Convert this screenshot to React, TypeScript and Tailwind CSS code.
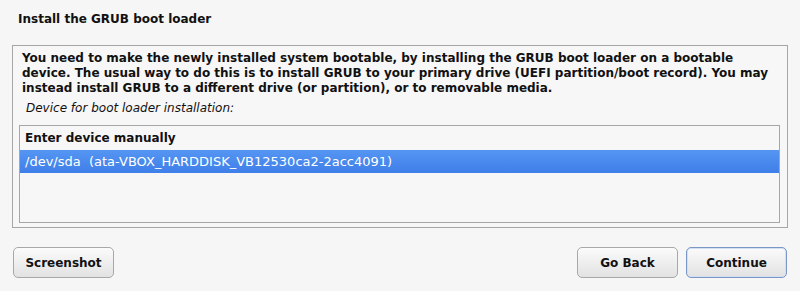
import React from "react";

const font = { fontFamily: '"DejaVu Sans", "Liberation Sans", sans-serif' };

function Btn({ label, primary }: { label: string; primary?: boolean }) {
  return (
    <button
      className={
        "h-[31px] w-[101px] rounded-[5px] border text-[12px] font-bold text-[#111] bg-gradient-to-b from-[#fbfbfb] to-[#e2e2e2] " +
        (primary ? "border-[#7a97c6] shadow-[inset_0_0_0_1px_#d4e0f2]" : "border-[#a8a8a8]")
      }
      style={font}
    >
      {label}
    </button>
  );
}

export default function App() {
  return (
    <div className="w-[800px] h-[291px] bg-[#f6f6f6] text-[#111]" style={font}>
      <div className="pl-[18px] pt-[11px] h-[45px] text-[12px] font-bold leading-[16px]">
        Install the GRUB boot loader
      </div>
      <div className="mx-[12px] h-[183px] border border-[#a6a6a6] bg-[#f7f7f7] pl-[6px] pr-[7px] pt-[5px]">
        <div className="pl-[3px] text-[12px] font-bold leading-[15px]">
          You need to make the newly installed system bootable, by installing the GRUB boot loader on a bootable device. The usual way to do this is to install GRUB to your primary drive (UEFI partition/boot record). You may instead install GRUB to a different drive (or partition), or to removable media.
        </div>
        <div className="pl-[7px] pt-[4px] text-[12px] italic leading-[16px]">
          Device for boot loader installation:
        </div>
        <div className="mt-[9px] h-[98px] border border-[#a6a6a6] bg-[#f7f7f7]">
          <div className="h-[24px] pl-[5px] flex items-center text-[12px] font-bold">Enter device manually</div>
          <div className="h-[23px] pl-[5px] flex items-center text-[13px] font-normal text-white bg-gradient-to-b from-[#5595f2] to-[#3f7fe9] whitespace-pre">
            /dev/sda  (ata-VBOX_HARDDISK_VB12530ca2-2acc4091)
          </div>
        </div>
      </div>
      <div className="flex items-center justify-between px-[13px] mt-[19px]">
        <Btn label="Screenshot" />
        <div className="flex gap-[8px]">
          <Btn label="Go Back" />
          <Btn label="Continue" primary />
        </div>
      </div>
    </div>
  );
}
